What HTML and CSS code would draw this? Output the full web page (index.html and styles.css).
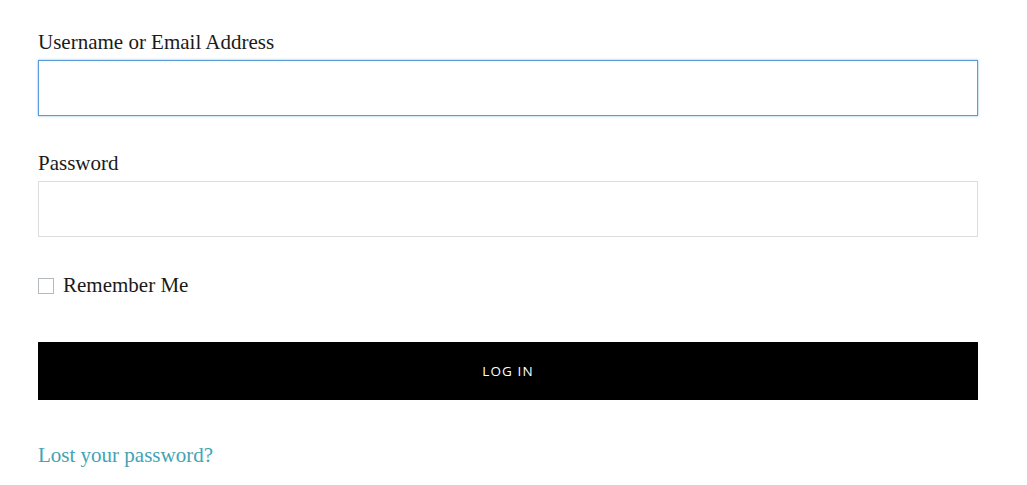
FILE: index.html
```html
<!DOCTYPE html>
<html lang="en">
<head>
<meta charset="utf-8">
<title>Log In</title>
<link rel="stylesheet" href="styles.css">
</head>
<body>
<form class="login-form">
  <div class="field">
    <label class="field-label" for="user_login">Username or Email Address</label>
    <input class="text-input is-focused" type="text" id="user_login">
  </div>
  <div class="field">
    <label class="field-label" for="user_pass">Password</label>
    <input class="text-input" type="password" id="user_pass">
  </div>
  <div class="remember">
    <input class="checkbox" type="checkbox" id="rememberme">
    <label class="remember-label" for="rememberme">Remember Me</label>
  </div>
  <button class="submit" type="button">LOG IN</button>
  <a class="lost-link" href="#">Lost your password?</a>
</form>
</body>
</html>
```
FILE: styles.css
```css
html, body {
  margin: 0;
  padding: 0;
  background: #ffffff;
}
body {
  font-family: "Liberation Serif", "Times New Roman", serif;
  color: #1a1a1a;
}
.login-form {
  display: flex;
  flex-direction: column;
  padding: 30px 49px 0 38px;
}
.field {
  display: flex;
  flex-direction: column;
  margin-bottom: 35px;
}
.field-label {
  font-size: 21px;
  line-height: 24px;
  margin-bottom: 6px;
}
.text-input {
  box-sizing: border-box;
  height: 56px;
  width: 100%;
  border: 1px solid #dddddd;
  background: #ffffff;
  margin: 0;
  padding: 0 10px;
  font-size: 18px;
  outline: none;
}
.text-input.is-focused {
  border-color: #5b9dd9;
  box-shadow: 0 0 2px rgba(30, 140, 190, 0.6);
}
.remember {
  display: flex;
  align-items: center;
  height: 30px;
  margin-bottom: 40px;
}
.checkbox {
  appearance: none;
  -webkit-appearance: none;
  box-sizing: border-box;
  width: 16px;
  height: 16px;
  margin: -2px 9px 0 0;
  border: 1px solid #b4b9be;
  background: #ffffff;
}
.remember-label {
  font-size: 21px;
  line-height: 26px;
  margin-top: -4px;
}
.submit {
  height: 58px;
  width: 100%;
  background: #000000;
  color: #ffffff;
  border: 0;
  margin: 0 0 40px 0;
  font-family: "Open Sans", "Noto Sans", sans-serif;
  font-size: 13.5px;
  letter-spacing: 1.1px;
  cursor: pointer;
}
.lost-link {
  align-self: flex-start;
  font-size: 21px;
  line-height: 30px;
  color: #42a3b5;
  text-decoration: none;
}
```
